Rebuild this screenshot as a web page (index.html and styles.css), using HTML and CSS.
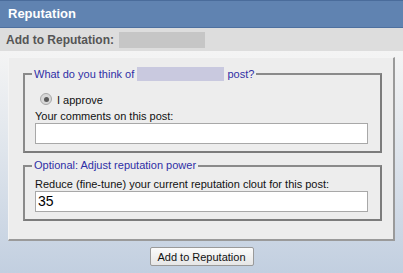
FILE: index.html
```html
<!DOCTYPE html>
<html>
<head>
<meta charset="utf-8">
<link rel="stylesheet" href="styles.css">
</head>
<body>
<div class="page">
  <div class="titlebar">Reputation</div>
  <div class="subbar">Add to Reputation: <span class="blur-user"></span></div>
  <div class="main">
    <div class="panel">
      <fieldset class="group">
        <legend class="legend">What do you think of <span class="blur-name"></span> post?</legend>
        <div class="radio-row"><span class="radio"><span class="dot"></span></span><span>I approve</span></div>
        <div class="label">Your comments on this post:</div>
        <div class="textbox"></div>
      </fieldset>
      <fieldset class="group group2">
        <legend class="legend">Optional: Adjust reputation power</legend>
        <div class="label">Reduce (fine-tune) your current reputation clout for this post:</div>
        <div class="textbox value">35</div>
      </fieldset>
    </div>
    <div class="actions"><button class="btn" type="button">Add to Reputation</button></div>
  </div>
</div>
</body>
</html>
```
FILE: styles.css
```css
html, body {
  margin: 0;
  padding: 0;
}
body {
  width: 403px;
  height: 273px;
  overflow: hidden;
  font-family: "Liberation Sans", Arial, sans-serif;
  background: linear-gradient(to bottom, #f6f6f6 0px, #f4f4f4 52px, #dfe5ec 150px, #c2cfe0 273px);
}
.page {
  display: flex;
  flex-direction: column;
}
.titlebar {
  height: 26px;
  background: #6083b1;
  border-top: 1px solid #4a6c9b;
  border-bottom: 1px solid #4e709f;
  color: #fff;
  font-weight: bold;
  font-size: 13px;
  line-height: 26px;
  padding-left: 8px;
}
.subbar {
  height: 23px;
  background: #dddddd;
  color: #555;
  font-weight: bold;
  font-size: 12px;
  line-height: 22px;
  padding-left: 6px;
  display: flex;
  align-items: center;
  gap: 5px;
}
.blur-user {
  display: inline-block;
  width: 86px;
  height: 16px;
  background: #c6c6c6;
}
.main {
  display: flex;
  flex-direction: column;
  padding: 6px 8px 0 8px;
}
.panel {
  background: #ededed;
  border-top: 1px solid #f4f4f4;
  border-left: 1px solid #f4f4f4;
  border-right: 2px solid #9a9a9a;
  border-bottom: 2px solid #9a9a9a;
  padding: 9px 11px 18px 14px;
  display: flex;
  flex-direction: column;
  gap: 6px;
}
.group {
  margin: 0;
  border: 2px solid #8a8a8a;
  border-right-color: #7c7c7c;
  border-bottom-color: #7c7c7c;
  padding: 0 12px 7px 10px;
  display: flex;
  flex-direction: column;
  font-size: 11px;
}
.legend {
  color: #2f2fa6;
  font-size: 11px;
  line-height: 13px;
  padding: 0 2px;
  margin-left: -3px;
}
.blur-name {
  display: inline-block;
  width: 87px;
  height: 14px;
  background: #c9c9df;
  vertical-align: -3px;
}
.radio-row {
  display: flex;
  align-items: center;
  gap: 5px;
  height: 16px;
  margin-top: 11px;
  padding-left: 5px;
  color: #111;
}
.radio {
  width: 10px;
  height: 10px;
  border-radius: 50%;
  border: 1px solid #a8a8a8;
  background: #d8d8d8;
  display: flex;
  align-items: center;
  justify-content: center;
  margin-top: -2px;
}
.dot {
  width: 5px;
  height: 5px;
  border-radius: 50%;
  background: #5a5a5a;
}
.label {
  color: #111;
  line-height: 13px;
  margin-top: 2px;
}
.group2 .label {
  margin-top: 6px;
}
.textbox {
  height: 19px;
  background: #fff;
  border: 1px solid #a8a8a8;
}
.value {
  font-size: 14px;
  line-height: 19px;
  padding-left: 2px;
  color: #000;
}
.actions {
  display: flex;
  justify-content: center;
  padding-top: 6px;
}
.btn {
  font-family: "Liberation Sans", Arial, sans-serif;
  font-size: 11px;
  height: 19px;
  width: 104px;
  padding: 0;
  border: 1px solid #9a9a9a;
  border-radius: 2px;
  background: linear-gradient(to bottom, #fbfbfb, #e6e6e6);
  color: #111;
}
```
